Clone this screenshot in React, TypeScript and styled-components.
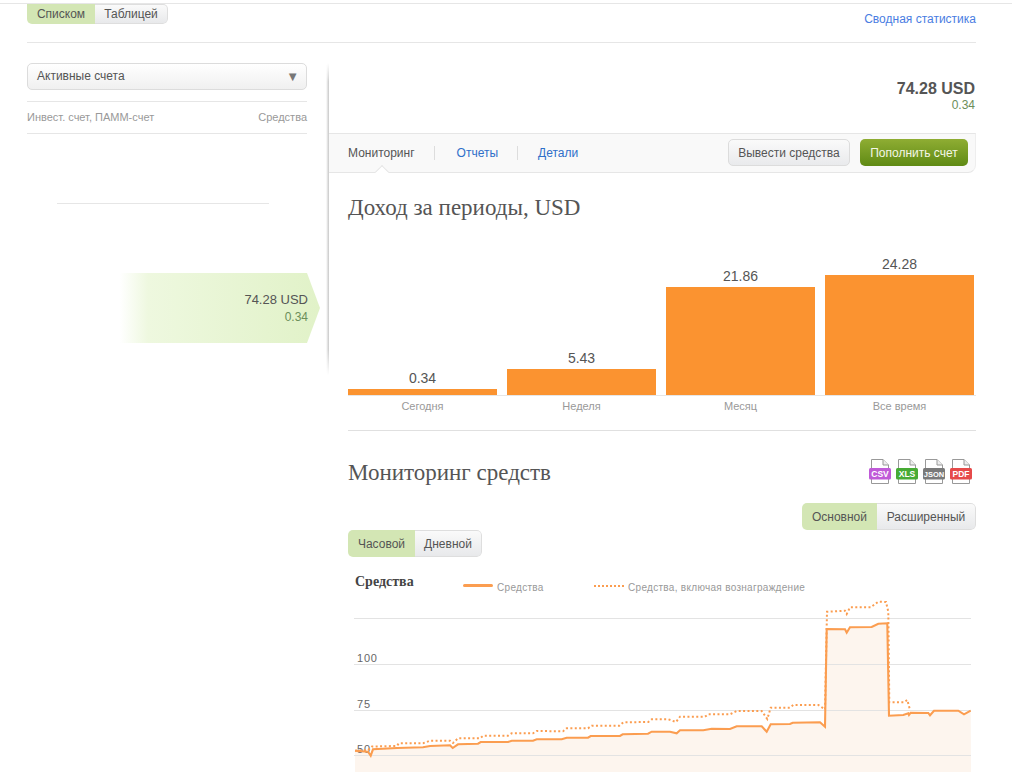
import React from "react";
import styled, { createGlobalStyle } from "styled-components";

const periods = [
  { value: "0.34", label: "Сегодня", height: 6 },
  { value: "5.43", label: "Неделя", height: 26 },
  { value: "21.86", label: "Месяц", height: 108 },
  { value: "24.28", label: "Все время", height: 120 },
];

const exportsList = [
  { name: "CSV", color: "#c05ad8" },
  { name: "XLS", color: "#47ab35" },
  { name: "JSON", color: "#7a7a7a" },
  { name: "PDF", color: "#e64a4a" },
];

const solidLine =
  "355,750.7 368,751.7 370.7,755.7 373,749.3 397,748 423,747.3 430,746 450,745.3 452.7,748 458,744.3 478,743.7 480.7,742 508,742 511.7,740.7 533,740.7 536.7,739.3 561.7,739.3 566.7,737.7 588,737.7 590.7,736 620,736 622.7,734.3 648,733.7 651.7,731.7 670,731.7 676.7,733.3 680,730.3 703.3,730.3 711.7,728.7 730,729 736.7,726.3 761.7,726.3 766.7,731.7 770.7,724.3 790,724 792.7,722.7 820,722.3 825,726.7 826.7,629 845,629.3 846.7,632.7 850,627.3 871.7,627 878.3,623.7 887.3,623.3 889,715.7 903.3,715 908.3,713.3 909,715 910.7,712.7 928.3,713 930,715.3 934,710.7 958.3,710.7 964,714.3 970.7,710.7";

const dottedLine =
  "355,750.7 368,750 372,746.5 396.7,746 399,743.3 423,743.3 430,740.7 450,740.7 453,743 458,738.3 480,738.3 483.3,735.7 508,735.7 511.7,733.3 533,733.3 536.7,731 563,731.3 566.7,728.3 588,728.3 591.7,725.7 619.3,725.7 623.3,722.3 648.3,722 651.7,719.3 668.3,719.3 676,722 680,716.7 705,716.7 708.3,714.3 730,714.3 736.7,711 761.7,711 767.3,719 770.7,707.7 790,707.7 793.3,705 818.3,705 825,709.3 827,611.7 845,610.7 846.7,614 850,607.3 870.7,607.3 878.3,601.7 886,602 888.3,611.7 889.3,702.3 904,702.3 907.3,700 910,710";

function App() {
  return (
    <Page>
      <GlobalStyle />
      <TopRule />
      <Container>
        <Toolbar>
          <CutToggle>
            <ToggleItem $active $width={68}>Списком</ToggleItem>
            <ToggleItem $width={73}>Таблицей</ToggleItem>
          </CutToggle>
          <SummaryLink>Сводная статистика</SummaryLink>
        </Toolbar>

        <Columns>
          <Side>
            <Select>
              <SelectText>Активные счета</SelectText>
              <Caret>▼</Caret>
            </Select>
            <SideHeader>
              <span>Инвест. счет, ПАММ-счет</span>
              <span>Средства</span>
            </SideHeader>
            <SideRule />
            <AccountArrow>
              <AccountSum>74.28 USD</AccountSum>
              <AccountGain>0.34</AccountGain>
            </AccountArrow>
          </Side>

          <Main>
            <Balance>
              <BalanceSum>74.28 USD</BalanceSum>
              <BalanceGain>0.34</BalanceGain>
            </Balance>

            <Tabs>
              <TabList>
                <Tab $active>Мониторинг</Tab>
                <Tab>Отчеты</Tab>
                <Tab $last>Детали</Tab>
              </TabList>
              <TabActions>
                <GreyButton>Вывести средства</GreyButton>
                <GreenButton>Пополнить счет</GreenButton>
              </TabActions>
            </Tabs>

            <Content>
              <Heading>Доход за периоды, USD</Heading>
              <Bars>
                {periods.map((p) => (
                  <BarColumn key={p.label}>
                    <BarValue>{p.value}</BarValue>
                    <Bar $height={p.height} />
                  </BarColumn>
                ))}
              </Bars>
              <BarLabels>
                {periods.map((p) => (
                  <BarLabel key={p.label}>{p.label}</BarLabel>
                ))}
              </BarLabels>

              <SectionHead>
                <Heading>Мониторинг средств</Heading>
                <ExportIcons>
                  {exportsList.map((e) => (
                    <svg key={e.name} width="24" height="26" viewBox="0 0 24 26">
                      <path d="M3.5 .5H15L20.5 6V24.5H3.5Z" fill="#fff" stroke="#999" />
                      <path d="M15 .5V6H20.5" fill="#eee" stroke="#999" />
                      <rect x="1" y="9" width="22" height="11.5" rx="1.5" fill={e.color} />
                      <text
                        x="12"
                        y="18"
                        textAnchor="middle"
                        fontFamily="'Liberation Sans', Arial, sans-serif"
                        fontWeight="700"
                        fontSize={e.name === "JSON" ? 7.5 : 8.5}
                        fill="#fff"
                      >
                        {e.name}
                      </text>
                    </svg>
                  ))}
                </ExportIcons>
              </SectionHead>

              <ModeRow>
                <Toggle>
                  <ToggleItem $active $width={75}>Основной</ToggleItem>
                  <ToggleItem $width={99}>Расширенный</ToggleItem>
                </Toggle>
              </ModeRow>
              <Toggle>
                <ToggleItem $active $width={67}>Часовой</ToggleItem>
                <ToggleItem $width={67}>Дневной</ToggleItem>
              </Toggle>

              <ChartHead>
                <ChartTitle>Средства</ChartTitle>
                <LegendItem>
                  <LegendSolid />
                  Средства
                </LegendItem>
                <LegendItem $wide>
                  <LegendDotted />
                  Средства, включая вознаграждение
                </LegendItem>
              </ChartHead>

              <Plot viewBox="348 600 628 173" width="628" height="173">
                <polygon points={`355,772 ${solidLine} 971,772`} fill="#fdf5ee" />
                {[618, 664, 710, 755].map((y) => (
                  <line key={y} x1="354" x2="971" y1={y + 0.5} y2={y + 0.5} stroke="#e3e3e3" />
                ))}
                <AxisText x="357" y="662">100</AxisText>
                <AxisText x="357" y="708">75</AxisText>
                <AxisText x="357" y="753">50</AxisText>
                <polyline points={solidLine} fill="none" stroke="#fb9d50" strokeWidth="2.1" />
                <polyline
                  points={dottedLine}
                  fill="none"
                  stroke="#fb9d50"
                  strokeWidth="2"
                  strokeDasharray="2 2.4"
                />
              </Plot>
            </Content>
          </Main>
        </Columns>
      </Container>
    </Page>
  );
}

export default App;

const GlobalStyle = createGlobalStyle`
  html, body {
    margin: 0;
    padding: 0;
    background: #fff;
  }
  body {
    font-family: "Liberation Sans", Arial, sans-serif;
    font-size: 12px;
    color: #555;
  }
`;
const Page = styled.div`
  width: 1012px;
  height: 773px;
  overflow: hidden;
  background: #fff;
`;
const TopRule = styled.div`
  height: 3px;
  border-bottom: 1px solid #e6e6e6;
`;
const Container = styled.div`
  padding: 0 36px 0 27px;
`;
const Toolbar = styled.div`
  height: 38px;
  display: flex;
  justify-content: space-between;
  border-bottom: 1px solid #e6e6e6;
`;
const Toggle = styled.div`
  display: inline-flex;
  height: 27px;
  border-radius: 5px;
  overflow: hidden;
`;
const CutToggle = styled(Toggle)`
  height: 20px;
  border-radius: 0 0 5px 5px;
`;
const ToggleItem = styled.div<{ $active?: boolean; $width: number }>`
  width: ${(p) => p.$width}px;
  box-sizing: border-box;
  display: flex;
  align-items: center;
  justify-content: center;
  font-size: 12px;
  color: #555;
  background: ${(p) =>
    p.$active ? "#d3e6b4" : "linear-gradient(#fafafa, #e8e9eb)"};
  border: ${(p) => (p.$active ? "0" : "1px solid #dedede")};
  border-left: 0;
  border-radius: ${(p) => (p.$active ? "0" : "0 5px 5px 0")};
`;
const SummaryLink = styled.a`
  margin-top: 8px;
  font-size: 12px;
  line-height: 14px;
  color: #4a7de2;
`;
const Columns = styled.div`
  display: flex;
  align-items: flex-start;
`;
const Side = styled.div`
  position: relative;
  width: 302px;
  height: 312px;
  box-sizing: border-box;
  margin-top: 20px;
  padding-right: 22px;

  &::after {
    content: "";
    position: absolute;
    top: 0;
    right: 0;
    bottom: 0;
    width: 3px;
    background: linear-gradient(to right, rgba(190, 190, 190, 0), #c8c8c8);
    mask-image: linear-gradient(transparent, #000 6%, #000 92%, transparent);
  }
`;
const Select = styled.div`
  height: 27px;
  box-sizing: border-box;
  display: flex;
  align-items: center;
  justify-content: space-between;
  padding: 0 7px 0 9px;
  font-size: 12px;
  color: #555;
  border: 1px solid #dcdcdc;
  border-radius: 5px;
  background: linear-gradient(#fff, #f0f0f0);
`;
const SelectText = styled.span`
  margin-top: -2px;
`;
const Caret = styled.span`
  font-size: 13px;
  color: #777;
`;
const SideHeader = styled.div`
  height: 33px;
  box-sizing: border-box;
  margin-top: 11px;
  padding-bottom: 2px;
  display: flex;
  align-items: center;
  justify-content: space-between;
  font-size: 11px;
  color: #999;
  border-top: 1px solid #e6e6e6;
  border-bottom: 1px solid #e6e6e6;
`;
const SideRule = styled.div`
  width: 212px;
  height: 1px;
  margin: 69px 0 69px 30px;
  background: #e6e6e6;
`;
const AccountArrow = styled.div`
  width: 200px;
  height: 70px;
  box-sizing: border-box;
  margin-left: 93px;
  padding: 19px 12px 0 0;
  text-align: right;
  background: linear-gradient(to right, #fff, #eef8df 14%, #e1f2c8);
  clip-path: polygon(0 0, 187px 0, 100% 50%, 187px 100%, 0 100%);
`;
const AccountSum = styled.div`
  font-size: 13px;
  line-height: 16px;
  color: #555;
`;
const AccountGain = styled.div`
  font-size: 12px;
  line-height: 16px;
  margin-top: 1px;
  color: #6b8e5a;
`;
const Main = styled.div`
  width: 647px;
`;
const Balance = styled.div`
  height: 90px;
  box-sizing: border-box;
  padding: 37px 1px 0 0;
  text-align: right;
`;
const BalanceSum = styled.div`
  font-size: 16px;
  line-height: 18px;
  font-weight: 700;
  color: #555;
`;
const BalanceGain = styled.div`
  font-size: 12px;
  line-height: 14px;
  color: #6b8e5a;
`;
const Tabs = styled.div`
  height: 40px;
  box-sizing: border-box;
  display: flex;
  align-items: center;
  justify-content: space-between;
  padding: 0 7px 1px 19px;
  background: #f9f9f9;
  border-top: 1px solid #e6e6e6;
  border-bottom: 1px solid #e6e6e6;
  border-right: 1px solid #eee;
  border-bottom-right-radius: 8px;
`;
const TabList = styled.div`
  display: flex;
  margin-top: 1px;
`;
const Tab = styled.div<{ $active?: boolean; $last?: boolean }>`
  position: relative;
  font-size: 12px;
  line-height: 14px;
  padding-right: ${(p) => (p.$last ? "0" : "19px")};
  margin-right: ${(p) => (p.$last ? "0" : p.$active ? "22px" : "20px")};
  border-right: ${(p) => (p.$last ? "0" : "1px solid #ddd")};
  color: ${(p) => (p.$active ? "#555" : "#2f6fc9")};

  &::after {
    content: "";
    display: ${(p) => (p.$active ? "block" : "none")};
    position: absolute;
    left: 29px;
    bottom: -17px;
    width: 9px;
    height: 9px;
    background: #fff;
    border-left: 1px solid #e6e6e6;
    border-top: 1px solid #e6e6e6;
    transform: rotate(45deg);
  }
`;
const TabActions = styled.div`
  display: flex;
  gap: 10px;
`;
const GreyButton = styled.div`
  width: 122px;
  height: 27px;
  box-sizing: border-box;
  display: flex;
  align-items: center;
  justify-content: center;
  font-size: 12px;
  color: #555;
  border: 1px solid #dcdcdc;
  border-radius: 5px;
  background: linear-gradient(#fafafa, #e9eaec);
`;
const GreenButton = styled.div`
  width: 108px;
  height: 27px;
  display: flex;
  align-items: center;
  justify-content: center;
  font-size: 12px;
  color: #f4f7e6;
  border-radius: 5px;
  background: linear-gradient(#8fad33, #5f8a14);
`;
const Content = styled.div`
  padding: 22px 0 0 19px;
`;
const Heading = styled.h2`
  margin: 0;
  font-family: "Liberation Serif", "Times New Roman", serif;
  font-size: 23px;
  line-height: 26px;
  font-weight: 400;
  color: #555;
`;
const Bars = styled.div`
  margin-top: 22px;
  height: 152px;
  display: flex;
  align-items: flex-end;
  gap: 10px;
  border-bottom: 1px solid #e6e6e6;
`;
const BarColumn = styled.div`
  width: 149px;
  text-align: center;
`;
const BarValue = styled.div`
  font-size: 14px;
  line-height: 16px;
  margin-bottom: 3px;
  color: #555;
`;
const Bar = styled.div<{ $height: number }>`
  height: ${(p) => p.$height}px;
  background: #fb9330;
`;
const BarLabels = styled.div`
  display: flex;
  gap: 10px;
  height: 34px;
  border-bottom: 1px solid #e0e0e0;
`;
const BarLabel = styled.div`
  width: 149px;
  margin-top: 4px;
  text-align: center;
  font-size: 11px;
  line-height: 13px;
  color: #999;
`;
const SectionHead = styled.div`
  margin-top: 29px;
  display: flex;
  justify-content: space-between;
  align-items: flex-start;
`;
const ExportIcons = styled.div`
  display: flex;
  gap: 3px;
  margin: -1px 3px 0 0;
  height: 26px;
`;
const ModeRow = styled.div`
  display: flex;
  justify-content: flex-end;
  margin-top: 17px;
`;
const ChartHead = styled.div`
  display: flex;
  align-items: center;
  height: 20px;
  margin-top: 14px;
  padding-left: 7px;
`;
const ChartTitle = styled.div`
  width: 108px;
  margin-top: 1px;
  font-family: "Liberation Serif", "Times New Roman", serif;
  font-size: 14px;
  font-weight: 700;
  color: #444;
`;
const LegendItem = styled.div<{ $wide?: boolean }>`
  display: flex;
  align-items: center;
  gap: 4px;
  width: ${(p) => (p.$wide ? "auto" : "131px")};
  margin-top: 12px;
  font-size: 10px;
  letter-spacing: 0.3px;
  white-space: nowrap;
  color: #999;
`;
const LegendSolid = styled.i`
  width: 30px;
  height: 3px;
  margin-top: -3px;
  border-radius: 2px;
  background: #fb9d50;
`;
const LegendDotted = styled.i`
  width: 30px;
  margin-top: -3px;
  border-top: 2px dotted #fb9d50;
`;
const Plot = styled.svg`
  display: block;
  margin-top: 9px;
`;
const AxisText = styled.text`
  font-family: "Liberation Sans", Arial, sans-serif;
  font-size: 11px;
  letter-spacing: 0.8px;
  fill: #666;
`;
